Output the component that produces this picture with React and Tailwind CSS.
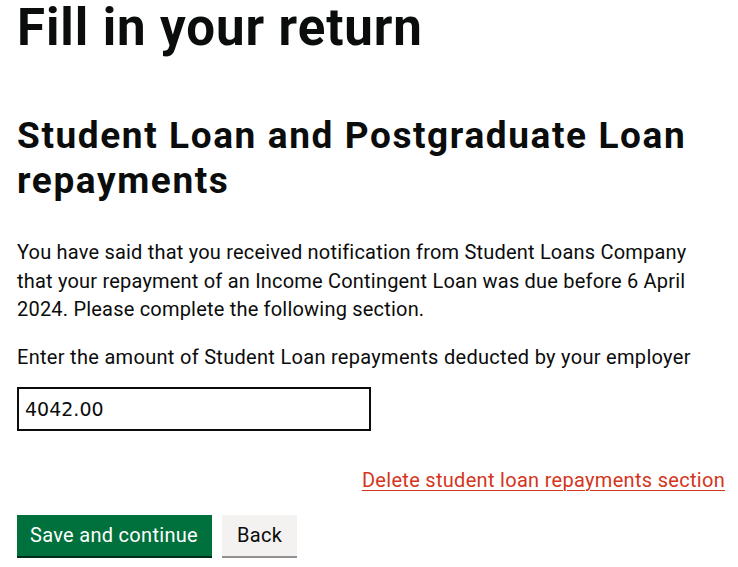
import React from 'react';

const App = () => {
    return (
        <div className="min-h-[567px] bg-white text-[#0b0c0c] font-['Roboto',sans-serif] pl-[17px] pr-[13px]">
            <h1 className="text-[51px] leading-[56px] font-bold tracking-[0.9px] mb-[57px]">Fill in your return</h1>

            <h2 className="text-[37px] leading-[45px] font-bold tracking-[1.6px] mb-[35px]">
                Student Loan and Postgraduate Loan repayments
            </h2>

            <p className="text-[20px] leading-[28.5px] tracking-[0.2px] mb-[19px]">
                You have said that you received notification from Student Loans Company that your repayment of an Income Contingent Loan was due before 6 April 2024. Please complete the following section.
            </p>

            <label htmlFor="amount" className="block text-[20px] leading-[28px] tracking-[0.3px] mb-[16px]">
                Enter the amount of Student Loan repayments deducted by your employer
            </label>
            <input
                id="amount"
                defaultValue="4042.00"
                className="block box-border w-[354px] h-[44px] border-2 border-[#0b0c0c] px-[6px] text-[19px] font-['DejaVu_Sans',sans-serif] outline-none"
            />

            <div className="flex justify-end mt-[37px]">
                <a href="#" className="text-[20px] leading-[25px] tracking-[0.3px] text-[#d4351c] underline underline-offset-[3px] decoration-1">
                    Delete student loan repayments section
                </a>
            </div>

            <div className="flex gap-[10px] mt-[22px]">
                <button className="bg-[#00703c] text-white text-[20px] leading-[20px] tracking-[0.3px] pl-[13px] pr-[14px] pt-[10px] pb-[11px] shadow-[0_2px_0_#002d18]">
                    Save and continue
                </button>
                <button className="bg-[#f3f2f1] text-[#0b0c0c] text-[20px] leading-[20px] tracking-[0.3px] px-[15px] pt-[10px] pb-[11px] shadow-[0_2px_0_#929191]">
                    Back
                </button>
            </div>
        </div>
    );
};

export default App;
